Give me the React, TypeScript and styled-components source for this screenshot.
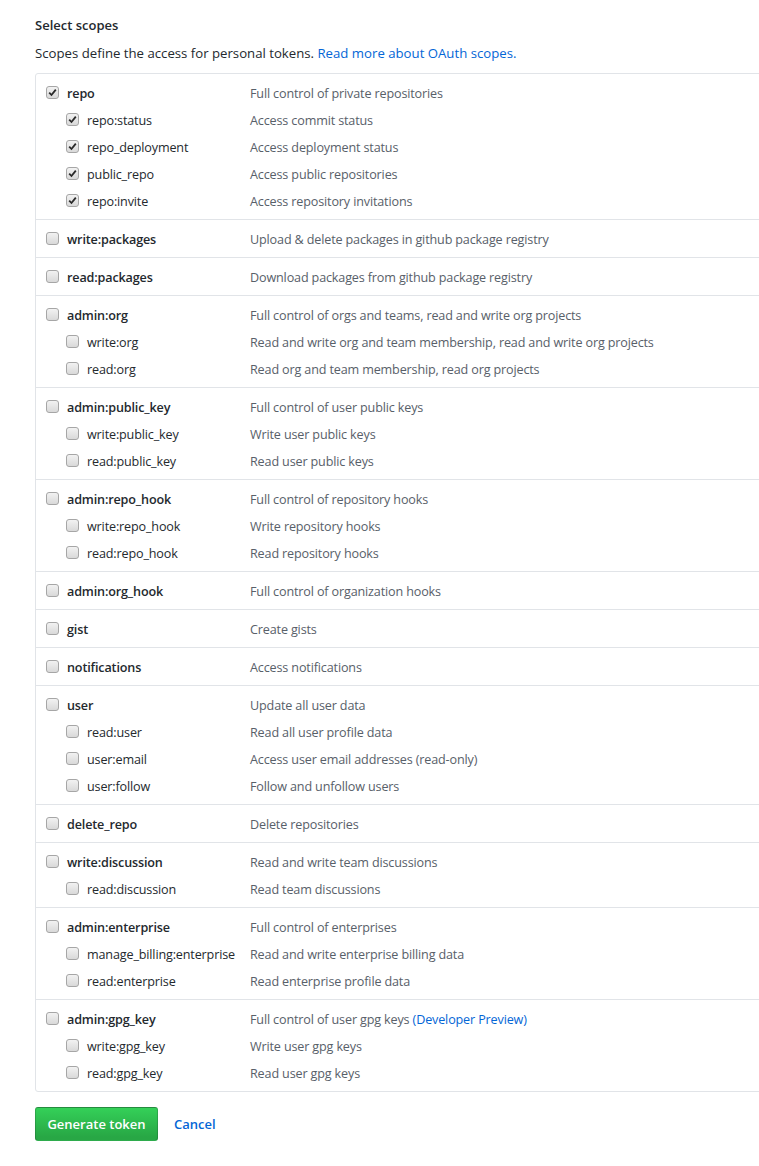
import React from "react";
import styled, { createGlobalStyle } from "styled-components";

const Global = createGlobalStyle`
  html, body { margin: 0; padding: 0; background: #fff; overflow-x: hidden; }
  body { font-family: "Open Sans", "Noto Sans", sans-serif; font-size: 13px; color: #24292e; }
`;

const Page = styled.div`
  padding: 15px 0 24px 35px;
  width: 760px;
`;

const Heading = styled.h3`
  margin: 0;
  font-size: 13px;
  font-weight: 600;
  line-height: 20px;
`;

const Note = styled.p`
  margin: 8px 0 10px;
  font-size: 13.2px;
  line-height: 20px;
  color: #24292e;
`;

const Link = styled.a`
  color: #0366d6;
  text-decoration: none;
`;

const Box = styled.div`
  border: 1px solid #e1e4e8;
  border-radius: 3px;
  width: 760px;
  font-size: 12.6px;
  letter-spacing: -0.15px;
`;

const Group = styled.div`
  padding: 5px 0;
  & + & { border-top: 1px solid #e1e4e8; }
`;

const Row = styled.div`
  display: grid;
  grid-template-columns: 214px 1fr;
  height: 27px;
  box-sizing: border-box;
  padding-top: 2px;
  align-items: center;
`;

const LabelCell = styled.label<{ $child?: boolean }>`
  display: flex;
  align-items: center;
  gap: 8px;
  padding-left: ${(p) => (p.$child ? 30 : 10)}px;
  font-weight: ${(p) => (p.$child ? 400 : 600)};
  color: #24292e;
  white-space: nowrap;
`;

const Desc = styled.span`
  color: #586069;
  white-space: nowrap;
`;

const Check = styled.span`
  width: 13px;
  height: 13px;
  box-sizing: border-box;
  border: 1px solid #a6a6a6;
  border-radius: 3px;
  background: linear-gradient(#f2f2f2, #d9d9d9);
  display: inline-flex;
  align-items: center;
  justify-content: center;
  flex: none;
  margin-top: -3px;
`;

const Actions = styled.div`
  display: flex;
  align-items: center;
  gap: 16px;
  margin-top: 15px;
`;

const Button = styled.button`
  font-family: inherit;
  font-size: 13px;
  font-weight: 600;
  color: #fff;
  height: 34px;
  width: 123px;
  padding: 0;
  border: 1px solid rgba(27, 31, 35, 0.2);
  border-radius: 3px;
  background: linear-gradient(-180deg, #34d058 0%, #28a745 90%);
  cursor: pointer;
`;

const Cancel = styled.a`
  color: #0366d6;
  font-weight: 600;
  text-decoration: none;
`;

type Item = { name: string; desc: React.ReactNode; checked?: boolean };
type G = { parent: Item; children?: Item[] };

const groups: G[] = [
  {
    parent: { name: "repo", desc: "Full control of private repositories", checked: true },
    children: [
      { name: "repo:status", desc: "Access commit status", checked: true },
      { name: "repo_deployment", desc: "Access deployment status", checked: true },
      { name: "public_repo", desc: "Access public repositories", checked: true },
      { name: "repo:invite", desc: "Access repository invitations", checked: true },
    ],
  },
  { parent: { name: "write:packages", desc: "Upload & delete packages in github package registry" } },
  { parent: { name: "read:packages", desc: "Download packages from github package registry" } },
  {
    parent: { name: "admin:org", desc: "Full control of orgs and teams, read and write org projects" },
    children: [
      { name: "write:org", desc: "Read and write org and team membership, read and write org projects" },
      { name: "read:org", desc: "Read org and team membership, read org projects" },
    ],
  },
  {
    parent: { name: "admin:public_key", desc: "Full control of user public keys" },
    children: [
      { name: "write:public_key", desc: "Write user public keys" },
      { name: "read:public_key", desc: "Read user public keys" },
    ],
  },
  {
    parent: { name: "admin:repo_hook", desc: "Full control of repository hooks" },
    children: [
      { name: "write:repo_hook", desc: "Write repository hooks" },
      { name: "read:repo_hook", desc: "Read repository hooks" },
    ],
  },
  { parent: { name: "admin:org_hook", desc: "Full control of organization hooks" } },
  { parent: { name: "gist", desc: "Create gists" } },
  { parent: { name: "notifications", desc: "Access notifications" } },
  {
    parent: { name: "user", desc: "Update all user data" },
    children: [
      { name: "read:user", desc: "Read all user profile data" },
      { name: "user:email", desc: "Access user email addresses (read-only)" },
      { name: "user:follow", desc: "Follow and unfollow users" },
    ],
  },
  { parent: { name: "delete_repo", desc: "Delete repositories" } },
  {
    parent: { name: "write:discussion", desc: "Read and write team discussions" },
    children: [{ name: "read:discussion", desc: "Read team discussions" }],
  },
  {
    parent: { name: "admin:enterprise", desc: "Full control of enterprises" },
    children: [
      { name: "manage_billing:enterprise", desc: "Read and write enterprise billing data" },
      { name: "read:enterprise", desc: "Read enterprise profile data" },
    ],
  },
  {
    parent: {
      name: "admin:gpg_key",
      desc: (
        <>
          Full control of user gpg keys <Link href="#">(Developer Preview)</Link>
        </>
      ),
    },
    children: [
      { name: "write:gpg_key", desc: "Write user gpg keys" },
      { name: "read:gpg_key", desc: "Read user gpg keys" },
    ],
  },
];

const Tick = () => (
  <svg width="9" height="9" viewBox="0 0 9 9">
    <path d="M1.2 4.6 L3.5 7 L7.8 1.6" fill="none" stroke="#2a2a2a" strokeWidth="1.8" />
  </svg>
);

const ScopeRow = ({ item, child }: { item: Item; child?: boolean }) => (
  <Row>
    <LabelCell $child={child}>
      <Check>{item.checked && <Tick />}</Check>
      {item.name}
    </LabelCell>
    <Desc>{item.desc}</Desc>
  </Row>
);

export default function App() {
  return (
    <>
      <Global />
      <Page>
        <Heading>Select scopes</Heading>
        <Note>
          Scopes define the access for personal tokens. <Link href="#">Read more about OAuth scopes.</Link>
        </Note>
        <Box>
          {groups.map((g) => (
            <Group key={g.parent.name}>
              <ScopeRow item={g.parent} />
              {g.children?.map((c) => (
                <ScopeRow key={c.name} item={c} child />
              ))}
            </Group>
          ))}
        </Box>
        <Actions>
          <Button>Generate token</Button>
          <Cancel href="#">Cancel</Cancel>
        </Actions>
      </Page>
    </>
  );
}
